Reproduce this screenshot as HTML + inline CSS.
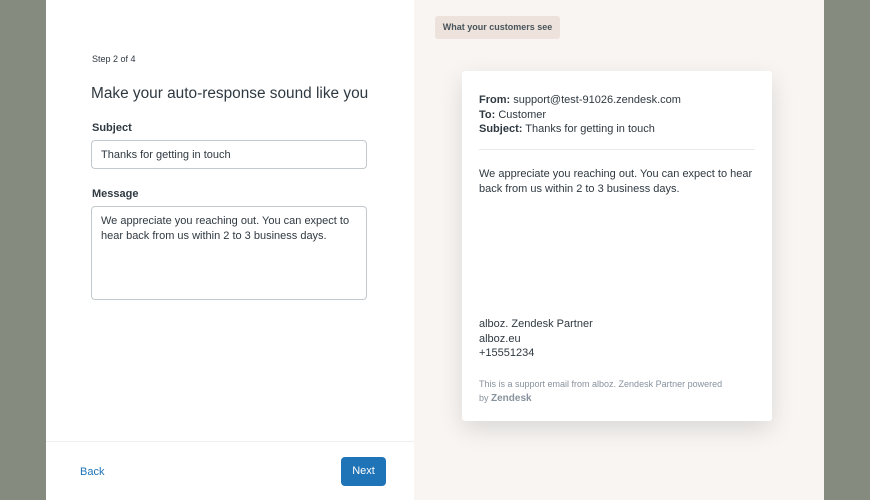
<!DOCTYPE html>
<html><head><style>
*{margin:0;padding:0;box-sizing:border-box}
body{width:870px;height:500px;background:#858b7f;font-family:"Liberation Sans",sans-serif;position:relative;overflow:hidden;color:#2f3941}
.l{position:absolute;left:46px;top:0;width:368px;height:500px;background:#fff}
.r{position:absolute;left:414px;top:0;width:410px;height:500px;background:#f8f5f3}
.a{position:absolute;white-space:nowrap}
.in{position:absolute;border:1px solid #c2c8cc;border-radius:4px;background:#fff;font-size:11px;color:#2f3941}
.card{position:absolute;left:462px;top:71px;width:310px;height:350px;background:#fff;border-radius:3px;box-shadow:0 8px 24px rgba(0,0,0,.12)}
.card .a{font-size:11px;color:#2f3941}
b{font-weight:bold}
</style></head><body>
<div class="l"></div>
<div class="r"></div>
<div class="a" style="left:92px;top:54px;font-size:9px">Step 2 of 4</div>
<div class="a" style="left:91px;top:85px;font-size:15.4px;color:#2f3941">Make your auto-response sound like you</div>
<div class="a" style="left:92px;top:122px;font-size:11px;font-weight:bold">Subject</div>
<div class="in" style="left:91px;top:140px;width:276px;height:29px;padding:8px 9px">Thanks for getting in touch</div>
<div class="a" style="left:92px;top:188px;font-size:11px;font-weight:bold">Message</div>
<div class="in" style="left:91px;top:206px;width:276px;height:94px;padding:7px 9px;line-height:15px">We appreciate you reaching out. You can expect to hear back from us within 2 to 3 business days.</div>
<div class="a" style="left:46px;top:441px;width:368px;height:1px;background:#edf0f2"></div>
<div class="a" style="left:80px;top:466px;font-size:11px;color:#1f73b7">Back</div>
<div class="a" style="left:341px;top:457px;width:45px;height:29px;background:#1f73b7;border-radius:4px;color:#fff;font-size:11px;text-align:center;line-height:29px">Next</div>
<div class="a" style="left:435px;top:16px;width:125px;height:23px;background:#ede3dc;border-radius:3px;font-size:9px;font-weight:bold;color:#49545c;text-align:center;line-height:23px">What your customers see</div>
<div class="card">
<div class="a" style="left:17px;top:22px;line-height:14.5px"><b>From:</b> support@test-91026.zendesk.com<br><b>To:</b> Customer<br><b>Subject:</b> Thanks for getting in touch</div>
<div class="a" style="left:17px;top:78px;width:276px;height:1px;background:#e9ebed"></div>
<div class="a" style="left:17px;top:96px;line-height:14.5px">We appreciate you reaching out. You can expect to hear<br>back from us within 2 to 3 business days.</div>
<div class="a" style="left:17px;top:246px;line-height:14.5px">alboz. Zendesk Partner<br>alboz.eu<br>+15551234</div>
<div class="a" style="left:17px;top:306px;font-size:9px;color:#87929d;line-height:14px">This is a support email from alboz. Zendesk Partner powered<br>by <b style="font-size:10px">Zendesk</b></div>
</div>
</body></html>
